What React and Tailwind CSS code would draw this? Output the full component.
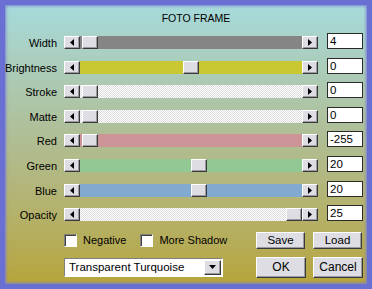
import React from "react";

const rows = [
  { label: "Width", track: "bg-[#858585]", thumb: "ml-[2px]", value: "4" },
  { label: "Brightness", track: "bg-[#c9c732]", thumb: "ml-[103px]", value: "0" },
  { label: "Stroke", track: "checker", thumb: "ml-[2px]", value: "0" },
  { label: "Matte", track: "checker", thumb: "ml-[2px]", value: "0" },
  { label: "Red", track: "bg-[#cc9497]", thumb: "ml-[2px]", value: "-255" },
  { label: "Green", track: "bg-[#92c894]", thumb: "ml-[111px]", value: "20" },
  { label: "Blue", track: "bg-[#82a9d0]", thumb: "ml-[111px]", value: "20" },
  { label: "Opacity", track: "checker", thumb: "ml-[206px]", value: "25" },
];

const raised =
  "bg-[#dddde3] border border-t-white border-l-white border-b-[#3a3a3a] border-r-[#3a3a3a] shadow-[inset_-1px_-1px_0_#9a9aa0]";

function ArrowLeft() {
  return (
    <svg width="4" height="7" viewBox="0 0 4 7">
      <path d="M4 0 L0 3.5 L4 7 Z" fill="#000" />
    </svg>
  );
}

function ArrowRight() {
  return (
    <svg width="4" height="7" viewBox="0 0 4 7">
      <path d="M0 0 L4 3.5 L0 7 Z" fill="#000" />
    </svg>
  );
}

function Slider({ track, thumb }) {
  const trackClass =
    track === "checker"
      ? "bg-[repeating-conic-gradient(#ffffff_0_25%,#dcdcdc_0_50%)] bg-[length:2px_2px]"
      : track;
  return (
    <div className="flex h-[13px] w-[254px] mt-[3px]">
      <div className={`${raised} w-[16px] h-full flex items-center justify-center`}>
        <ArrowLeft />
      </div>
      <div className={`flex-1 h-full flex ${trackClass}`}>
        <div className={`${raised} w-[16px] h-full ${thumb}`} />
      </div>
      <div className={`${raised} w-[16px] h-full flex items-center justify-center`}>
        <ArrowRight />
      </div>
    </div>
  );
}

function Checkbox({ label }) {
  return (
    <div className="flex items-center gap-[6px]">
      <div className="w-[13px] h-[13px] bg-white border border-t-[#808080] border-l-[#808080] border-b-white border-r-white shadow-[inset_1px_1px_0_#404040]" />
      <span>{label}</span>
    </div>
  );
}

export default function App() {
  return (
    <div className="w-[372px] h-[289px] bg-[#6a6fd3] p-[5px] font-['Liberation_Sans',Arial,sans-serif] text-[11px] text-black leading-none">
      <div className="w-full h-full bg-gradient-to-b from-[#a6dadb] via-[#afbf98] via-45% to-[#b7a53a] shadow-[inset_0_0_3px_1px_#7a7fd0] flex flex-col">
        <div className="text-center pt-[8px] h-[28px] text-[10.5px] pl-[20px]">FOTO FRAME</div>

        <div className="flex flex-col">
          {rows.map((r) => (
            <div key={r.label} className="flex h-[24.6px]">
              <div className="w-[52px] text-right mt-[5px]">{r.label}</div>
              <div className="ml-[7px]">
                <Slider track={r.track} thumb={r.thumb} />
              </div>
              <div className="ml-[9px] w-[36px] h-[16px] bg-white border border-[#2a2a2a] px-[2px] pt-[2px] text-[11.5px]">
                {r.value}
              </div>
            </div>
          ))}
        </div>

        <div className="flex items-center mt-[2px] pl-[59px]">
          <div className="flex gap-[14px] w-[192px]">
            <Checkbox label="Negative" />
            <Checkbox label="More Shadow" />
          </div>
          <div className="flex gap-[8px]">
            <button className={`${raised} w-[49px] h-[17px] text-[11.5px]`}>Save</button>
            <button className={`${raised} w-[49px] h-[17px] text-[11.5px]`}>Load</button>
          </div>
        </div>

        <div className="flex items-center mt-[8px] pl-[59px]">
          <div className="w-[159px] h-[19px] bg-white border border-t-[#808080] border-l-[#808080] border-b-white border-r-white flex items-center">
            <span className="flex-1 pl-[4px] text-[11.5px]">Transparent Turquoise</span>
            <div className={`${raised} w-[17px] h-[15px] mr-[1px] flex items-center justify-center`}>
              <svg width="7" height="4" viewBox="0 0 7 4">
                <path d="M0 0 L7 0 L3.5 4 Z" fill="#000" />
              </svg>
            </div>
          </div>
          <div className="flex gap-[7px] ml-[33px]">
            <button className={`${raised} w-[50px] h-[21px] text-[12px]`}>OK</button>
            <button className={`${raised} w-[50px] h-[21px] text-[12px]`}>Cancel</button>
          </div>
        </div>
      </div>
    </div>
  );
}
